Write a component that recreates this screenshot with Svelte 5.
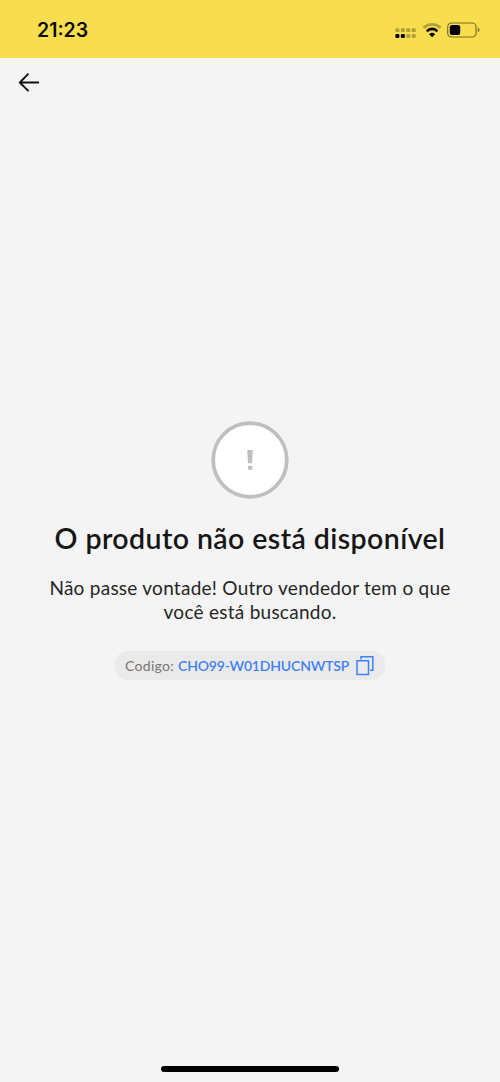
<script lang="ts">
  let title = "O produto não está disponível";
  let lines = ["Não passe vontade! Outro vendedor tem o que", "você está buscando."];
  let code = "CHO99-W01DHUCNWTSP";

  const dots = [0, 1, 2, 3];

  const handleCopy = () => {
    navigator.clipboard?.writeText(code);
  };
</script>

<div class="screen">
  <div class="status-bar">
    <span class="time">21:23</span>
    <svg class="status-icons" width="86" height="20" viewBox="0 0 86 20">
      {#each dots as i}
        <rect x={0.4 + i * 5.45} y="8.3" width="4" height="3.8" rx="1.2" fill="#000" opacity="0.28" />
        <rect x={0.4 + i * 5.45} y="14" width="4" height="4" rx="1.2" fill="#000" opacity={i < 2 ? 1 : 0.28} />
      {/each}
      <g fill="none" stroke="#000" stroke-width="2.7">
        <path d="M28.6 7.8 A12.2 12.2 0 0 1 45.6 7.8" opacity="0.28" />
        <path d="M31.8 11.2 A7.4 7.4 0 0 1 42.4 11.2" />
      </g>
      <path d="M34.1 14.2 A4.5 4.5 0 0 1 40.1 14.2 L37.1 17.3 Z" fill="#000" />
      <rect x="52.7" y="3" width="28.4" height="14" rx="4" fill="none" stroke="#000" stroke-opacity="0.5" stroke-width="1.2" />
      <rect x="54.8" y="5" width="10.4" height="10" rx="2.2" fill="#000" />
      <path d="M82.9 7.8 Q84.6 8.4 84.6 10 Q84.6 11.6 82.9 12.2 Z" fill="#000" opacity="0.5" />
    </svg>
  </div>

  <header class="nav">
    <button class="back" aria-label="Voltar">
      <svg width="22" height="20" viewBox="0 0 22 20">
        <path d="M21 10.5 H1.8 M10.5 1.7 L1.8 10.5 L10.5 19.2" fill="none" stroke="#111" stroke-width="1.9" />
      </svg>
    </button>
  </header>

  <main class="content">
    <svg class="alert" width="78" height="78" viewBox="0 0 78 78">
      <circle cx="39" cy="39" r="36.8" fill="#fff" stroke="#bfbfbf" stroke-width="3.7" />
      <path d="M36.3 29 H41.8 L41.1 42.2 H37 Z" fill="#bfbfbf" />
      <circle cx="39.1" cy="46.8" r="2.4" fill="#bfbfbf" />
    </svg>
    <h1>{title}</h1>
    <p class="message">
      {#each lines as line}
        <span>{line}</span>
      {/each}
    </p>
    <div class="code-pill">
      <span class="label">Codigo:</span>
      <span class="code">{code}</span>
      <button class="copy" aria-label="Copiar" on:click={handleCopy}>
        <svg width="18" height="20" viewBox="0 0 18 20">
          <g fill="none" stroke="#4080f5" stroke-width="1.5">
            <path d="M1 4.8 H12.5 V18.5 H1 Z" />
            <path d="M5 3.6 V0.8 H16.8 V14.3 H14" />
          </g>
        </svg>
      </button>
    </div>
  </main>

  <div class="home-indicator"></div>
</div>

<style>
  :global(body) {
    background: #f4f4f4;
  }

  .screen {
    height: 1082px;
    display: flex;
    flex-direction: column;
    background: #f4f4f4;
    font-family: Lato, "Open Sans", sans-serif;
    overflow: hidden;
  }

  .status-bar {
    height: 58px;
    box-sizing: border-box;
    padding: 20px 19px 18px 37px;
    display: flex;
    align-items: center;
    justify-content: space-between;
    background: #f8dd4e;
  }

  .time {
    font-family: Inter, sans-serif;
    font-size: 19.5px;
    font-weight: 600;
    line-height: 20px;
    color: #0b0a04;
  }

  button {
    display: flex;
    padding: 0;
    border: none;
    background: none;
  }

  .nav {
    height: 48px;
    box-sizing: border-box;
    padding: 14px 18px;
  }

  .content {
    flex: 1;
    padding-top: 315px;
    display: flex;
    flex-direction: column;
    align-items: center;
  }

  h1 {
    margin: 21px 0 0;
    font-size: 28.5px;
    font-weight: 600;
    line-height: 36px;
    letter-spacing: 0.42px;
    color: #161616;
    white-space: nowrap;
  }

  .message {
    margin: 20px 0 0;
    font-size: 19px;
    line-height: 24px;
    letter-spacing: 0.26px;
    color: #262626;
    text-align: center;
  }

  .message span {
    display: block;
    white-space: nowrap;
  }

  .code-pill {
    width: 270px;
    height: 29px;
    margin-top: 27px;
    box-sizing: border-box;
    padding: 0 11px 0 10px;
    display: flex;
    align-items: center;
    border-radius: 13px;
    background: #eaeaea;
    font-size: 14px;
    line-height: 20px;
    white-space: nowrap;
  }

  .label {
    margin-right: 4px;
    color: #757575;
    letter-spacing: 0.3px;
  }

  .code {
    color: #4080f5;
    font-weight: 600;
    letter-spacing: -0.18px;
  }

  .copy {
    margin-left: auto;
  }

  .home-indicator {
    width: 178px;
    height: 6px;
    margin: 0 auto 10px;
    border-radius: 3px;
    background: #000;
  }
</style>
